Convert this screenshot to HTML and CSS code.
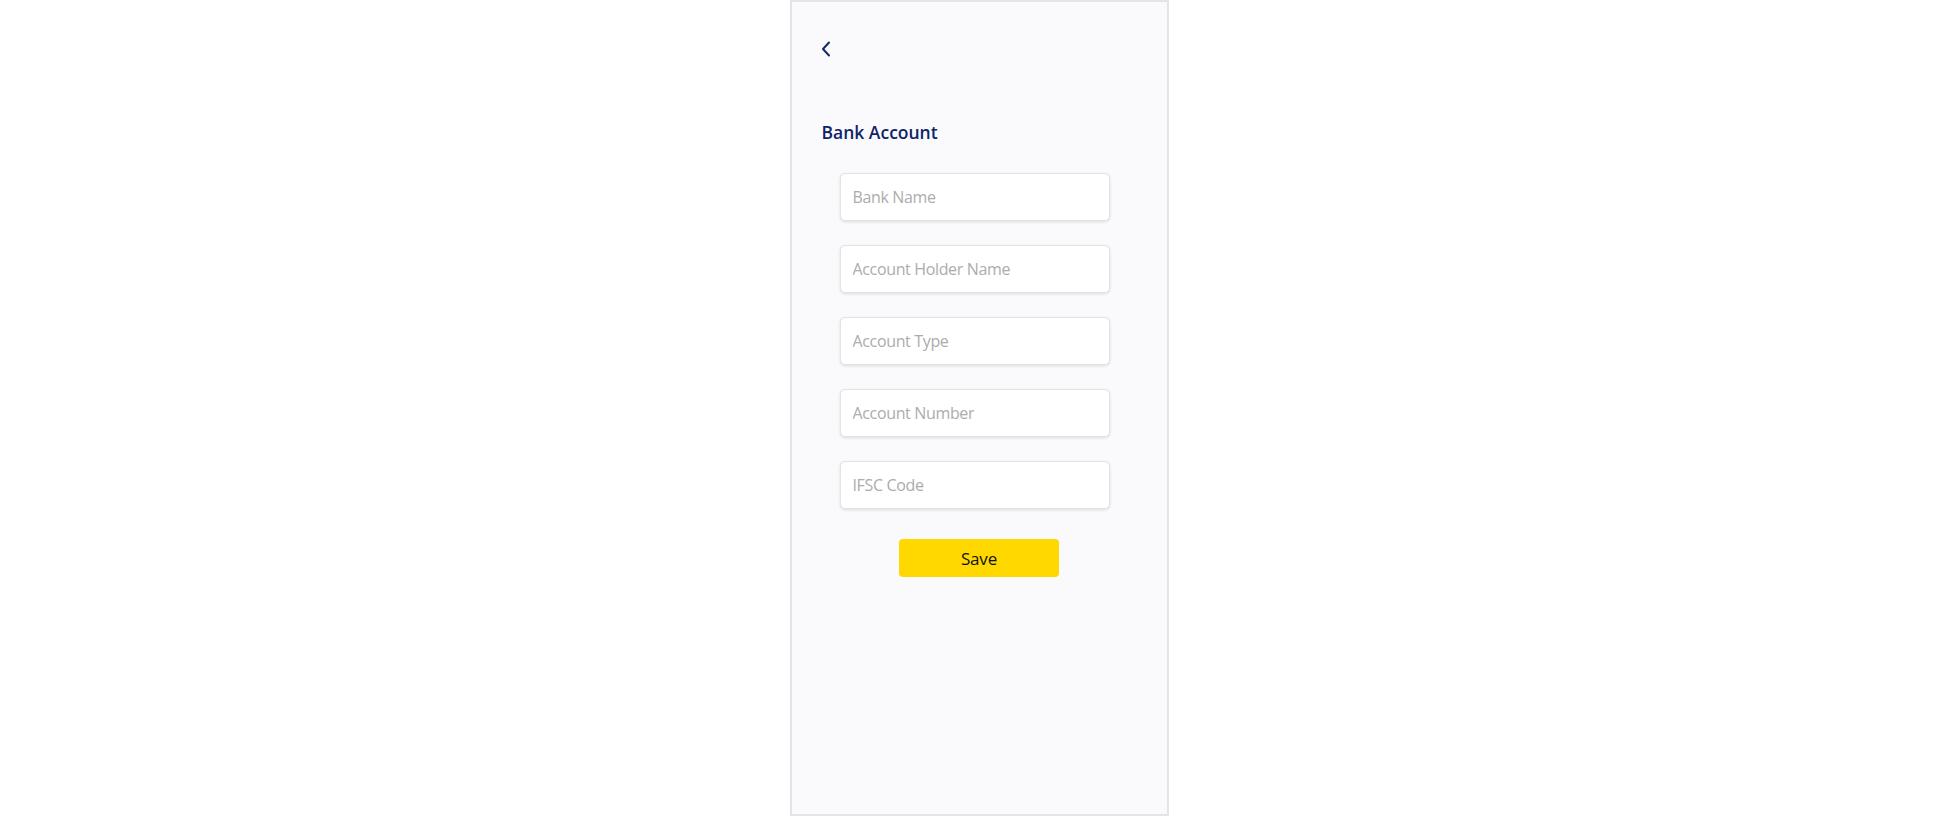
FILE: index.html
```html
<!DOCTYPE html>
<html lang="en">
<head>
<meta charset="utf-8">
<title>Bank Account</title>
<link rel="stylesheet" href="styles.css">
</head>
<body>
<div class="phone">
  <div class="topbar">
    <button class="back" type="button" aria-label="Back">
      <svg width="10" height="16" viewBox="0 0 10 16"><path d="M8 1.5 L2 8 L8 14.5" fill="none" stroke="#13296b" stroke-width="2" stroke-linecap="round" stroke-linejoin="round"/></svg>
    </button>
  </div>
  <h1 class="title">Bank Account</h1>
  <form class="form">
    <input class="field" type="text" placeholder="Bank Name">
    <input class="field" type="text" placeholder="Account Holder Name">
    <input class="field" type="text" placeholder="Account Type">
    <input class="field" type="text" placeholder="Account Number">
    <input class="field" type="text" placeholder="IFSC Code">
  </form>
  <div class="actions">
    <button class="save" type="button">Save</button>
  </div>
</div>
</body>
</html>
```
FILE: styles.css
```css
html, body {
  margin: 0;
  padding: 0;
  background: #ffffff;
  font-family: "Open Sans", "Noto Sans", sans-serif;
}
.phone {
  width: 375px;
  height: 812px;
  margin: 0 auto;
  border: 2px solid #e4e4e6;
  background: #fafafc;
  display: flex;
  flex-direction: column;
}
.topbar {
  padding: 39px 0 0 29px;
  height: 16px;
}
.back {
  display: block;
  padding: 0;
  margin: 0;
  border: 0;
  background: none;
  width: 10px;
  height: 16px;
  cursor: pointer;
}
.back svg { display: block; }
.title {
  margin: 63px 0 0 30px;
  font-size: 17.5px;
  line-height: 24px;
  font-weight: 600;
  color: #0f2467;
}
.form {
  display: flex;
  flex-direction: column;
  gap: 24px;
  padding-left: 48px;
  margin-top: 29px;
}
.field {
  width: 270px;
  height: 48px;
  box-sizing: border-box;
  border: 1px solid #e3e3e5;
  border-radius: 5px;
  background: #ffffff;
  box-shadow: 0 1px 3px rgba(0, 0, 0, 0.12);
  padding: 0 12px;
  font-family: "Open Sans", "Noto Sans", sans-serif;
  font-size: 16px;
  letter-spacing: -0.35px;
  color: #333;
  outline: none;
}
.field::placeholder {
  color: #acacac;
}
.actions {
  display: flex;
  justify-content: center;
  margin-top: 30px;
}
.save {
  width: 160px;
  height: 38px;
  border: 0;
  border-radius: 4px;
  background: #ffd800;
  color: #111111;
  font-family: "Open Sans", "Noto Sans", sans-serif;
  font-size: 17px;
  letter-spacing: -0.2px;
  cursor: pointer;
}
```
